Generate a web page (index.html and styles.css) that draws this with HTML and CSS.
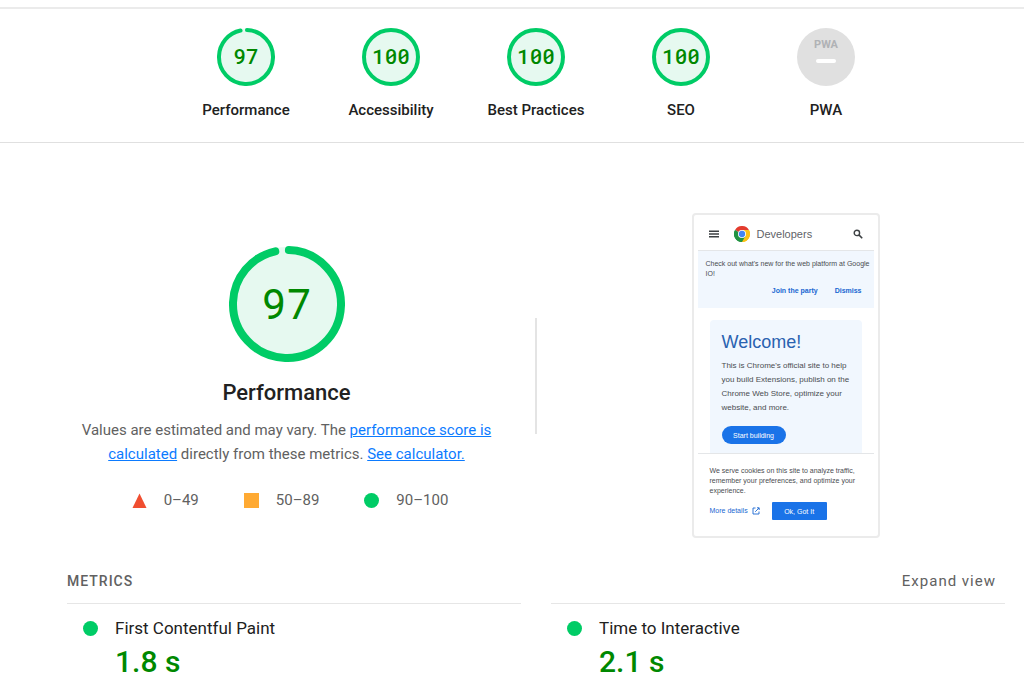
FILE: index.html
```html
<!DOCTYPE html>
<html lang="en">
<head>
    <meta charset="utf-8">
    <meta name="viewport" content="width=device-width, initial-scale=1">
    <link rel="stylesheet" href="styles.css">
    <title>Lighthouse Report</title>
</head>
<body>

    <header class="scores">
        <a href="#performance" class="score">
            <div class="gauge">
                <svg viewBox="0 0 116 116"><circle class="gauge-base" cx="58" cy="58" r="57"/><circle class="gauge-arc gauge-arc-97" cx="58" cy="58" r="54"/></svg>
                <span class="gauge-number">97</span>
            </div>
            <span class="score-label">Performance</span>
        </a>
        <a href="#accessibility" class="score">
            <div class="gauge">
                <svg viewBox="0 0 116 116"><circle class="gauge-base" cx="58" cy="58" r="57"/><circle class="gauge-arc" cx="58" cy="58" r="54"/></svg>
                <span class="gauge-number">100</span>
            </div>
            <span class="score-label">Accessibility</span>
        </a>
        <a href="#best-practices" class="score">
            <div class="gauge">
                <svg viewBox="0 0 116 116"><circle class="gauge-base" cx="58" cy="58" r="57"/><circle class="gauge-arc" cx="58" cy="58" r="54"/></svg>
                <span class="gauge-number">100</span>
            </div>
            <span class="score-label">Best Practices</span>
        </a>
        <a href="#seo" class="score">
            <div class="gauge">
                <svg viewBox="0 0 116 116"><circle class="gauge-base" cx="58" cy="58" r="57"/><circle class="gauge-arc" cx="58" cy="58" r="54"/></svg>
                <span class="gauge-number">100</span>
            </div>
            <span class="score-label">SEO</span>
        </a>
        <a href="#pwa" class="score">
            <div class="gauge gauge-pwa">
                <span class="pwa-text">PWA</span>
                <span class="pwa-dash"></span>
            </div>
            <span class="score-label">PWA</span>
        </a>
    </header>

    <main class="report" id="performance">

        <section class="category">
            <div class="summary">
                <div class="gauge gauge-big">
                    <svg viewBox="0 0 116 116"><circle class="gauge-base" cx="58" cy="58" r="57"/><circle class="gauge-arc gauge-arc-97" cx="58" cy="58" r="54"/></svg>
                    <span class="gauge-number">97</span>
                </div>
                <h1 class="summary-title">Performance</h1>
                <p class="summary-text">Values are estimated and may vary. The <a href="#scoring">performance score is calculated</a> directly from these metrics. <a href="#calculator">See calculator.</a></p>
                <ul class="legend">
                    <li><svg class="mark" viewBox="0 0 15 15"><path d="M7.5 0.5 L14.5 15 H0.5 Z" fill="#f04e30"/></svg>0–49</li>
                    <li><svg class="mark" viewBox="0 0 15 15"><rect width="15" height="15" fill="#ffaa33"/></svg>50–89</li>
                    <li><svg class="mark" viewBox="0 0 15 15"><circle cx="7.5" cy="7.5" r="7.5" fill="#00cc66"/></svg>90–100</li>
                </ul>
            </div>

            <div class="divider"></div>

            <!-- final screenshot of the audited page -->
            <div class="phone">
                <div class="phone-bar">
                    <svg class="menu-icon" viewBox="0 0 10 8"><path d="M0 1.2H10M0 4H10M0 6.8H10" stroke="#3c4043" stroke-width="1.4"/></svg>
                    <svg class="chrome-icon" viewBox="0 0 48 48">
                        <circle cx="24" cy="24" r="24" fill="#fff"/>
                        <path d="M24 24 L3.2 12 A24 24 0 0 1 44.8 12 Z" fill="#e33b2e"/>
                        <path d="M24 24 L44.8 12 A24 24 0 0 1 24 48 Z" fill="#fbc116"/>
                        <path d="M24 24 L24 48 A24 24 0 0 1 3.2 12 Z" fill="#229342"/>
                        <path d="M24 12 H44.8 A24 24 0 0 1 24 48 L34.4 30 Z" fill="#fbc116"/>
                        <path d="M13.6 30 L3.2 12 A24 24 0 0 0 24 48 L34.4 30 Z" fill="#229342"/>
                        <circle cx="24" cy="24" r="12" fill="#fff"/>
                        <circle cx="24" cy="24" r="9.5" fill="#4285f4"/>
                    </svg>
                    <span class="phone-brand">Developers</span>
                    <svg class="search-icon" viewBox="0 0 10 10"><circle cx="3.9" cy="3.9" r="2.7" fill="none" stroke="#3c4043" stroke-width="1.4"/><path d="M5.9 5.9 L9.2 9.2" stroke="#3c4043" stroke-width="1.6"/></svg>
                </div>
                <div class="notice">
                    <p>Check out what's new for the web platform at Google IO!</p>
                    <div class="notice-links"><a href="#party">Join the party</a><a href="#dismiss">Dismiss</a></div>
                </div>
                <div class="welcome">
                    <h2>Welcome!</h2>
                    <p>This is Chrome's official site to help you build Extensions, publish on the Chrome Web Store, optimize your website, and more.</p>
                    <button type="button" class="start">Start building</button>
                </div>
                <div class="cookies">
                    <p>We serve cookies on this site to analyze traffic, remember your preferences, and optimize your experience.</p>
                    <div class="cookies-row">
                        <a href="#details">More details<svg class="open-icon" viewBox="0 0 8 8"><path d="M3.5 1H1V7H7V4.5M5 0.8H7.2V3M7 1L3.2 4.8" fill="none" stroke="#1967d2" stroke-width="0.9"/></svg></a>
                        <button type="button" class="got-it">Ok, Got It</button>
                    </div>
                </div>
            </div>
        </section>

        <section class="metrics">
            <div class="metrics-head">
                <h2>METRICS</h2>
                <button type="button" class="expand">Expand view</button>
            </div>
            <div class="metrics-list">
                <div class="metric">
                    <span class="dot"></span>
                    <div>
                        <h3>First Contentful Paint</h3>
                        <p class="metric-value">1.8 s</p>
                    </div>
                </div>
                <div class="metric">
                    <span class="dot"></span>
                    <div>
                        <h3>Time to Interactive</h3>
                        <p class="metric-value">2.1 s</p>
                    </div>
                </div>
            </div>
        </section>

    </main>

</body>
</html>
```
FILE: styles.css
```css
* {
    box-sizing: border-box;
}

body {
    margin: 0;
    background-color: #fff;
    color: #212121;
    font-family: Roboto, "Liberation Sans", sans-serif;
    font-size: 15px;
}

h1, h2, h3, p, ul {
    margin: 0;
    padding: 0;
    font-weight: 400;
}

button {
    border: none;
    padding: 0;
    background: none;
    font-family: inherit;
    cursor: pointer;
}

/* score row */

.scores {
    display: flex;
    justify-content: center;
    margin-top: 7px;
    padding: 19px 19px 22px 67px;
    border-top: 2px solid #ebebeb;
    border-bottom: 1px solid #e0e0e0;
}

.score {
    display: flex;
    flex-direction: column;
    align-items: center;
    gap: 14px;
    width: 145px;
    color: inherit;
    text-decoration: none;
}

.score-label {
    font-weight: 500;
    line-height: 20px;
}

.gauge {
    display: grid;
    place-items: center;
    width: 58px;
    height: 58px;
    color: #008800;
    font-family: "Roboto Mono", "DejaVu Sans Mono", monospace;
    font-size: 21px;
    font-weight: 500;
}

.gauge svg, .gauge-number {
    grid-area: 1 / 1;
}

.gauge svg {
    width: 100%;
    height: 100%;
}

.gauge-number {
    padding-bottom: 2px;
}

.gauge-base {
    fill: #e6f9f0;
}

.gauge-arc {
    fill: none;
    stroke: #00cc66;
    stroke-width: 8;
    stroke-linecap: round;
}

.gauge-arc-97 {
    stroke-dasharray: 325 340;
    transform: rotate(-88deg);
    transform-origin: center;
}

.gauge-big {
    width: 116px;
    height: 116px;
    font-size: 42px;
    font-weight: 400;
}

.gauge-big .gauge-number {
    padding-bottom: 4px;
}

.gauge-pwa {
    align-content: center;
    gap: 8px;
    padding-bottom: 12px;
    border-radius: 50%;
    background-color: #e0e0e0;
}

.pwa-text {
    color: #b0b2b5;
    font-family: Roboto, sans-serif;
    font-size: 11px;
    font-weight: 700;
    line-height: 12px;
}

.pwa-dash {
    width: 20px;
    height: 4px;
    border-radius: 2px;
    background-color: #fff;
}

/* performance category */

.report {
    padding: 70px 19px 0 67px;
}

.category {
    display: grid;
    grid-template-columns: 1fr 2px 1fr;
    gap: 29px;
    align-items: center;
    justify-items: center;
}

.summary {
    display: flex;
    flex-direction: column;
    align-items: center;
    padding-top: 5px;
}

.summary-title {
    margin-top: 17px;
    font-size: 22px;
    font-weight: 500;
    line-height: 28px;
}

.summary-text {
    max-width: 410px;
    margin-top: 11px;
    color: #616161;
    line-height: 24px;
    text-align: center;
}

.summary-text a {
    color: #0c7bff;
}

.legend {
    display: flex;
    margin-top: 24px;
    color: #616161;
    line-height: 20px;
    list-style: none;
}

.legend li {
    display: flex;
    align-items: center;
    gap: 17px;
    margin: 0 19px 0 26px;
}

.mark {
    width: 15px;
    height: 15px;
}

.divider {
    width: 2px;
    height: 116px;
    background-color: #e4e4e4;
}

/* page screenshot */

.phone {
    width: 188px;
    padding: 4px 4px 16px;
    border: 2px solid #ebebeb;
    border-radius: 4px;
    color: #4a4d51;
    font-family: "Liberation Sans", Arial, sans-serif;
    font-size: 7px;
}

.phone a {
    color: #1967d2;
    text-decoration: none;
}

.phone-bar {
    display: flex;
    align-items: center;
    height: 32px;
    padding: 0 11px 1px;
    border-bottom: 1px solid #e4e6e8;
}

.menu-icon {
    width: 10px;
    height: 8px;
}

.chrome-icon {
    width: 16px;
    height: 16px;
    margin-left: 15px;
}

.phone-brand {
    margin-left: 7px;
    color: #5f6368;
    font-size: 11px;
}

.search-icon {
    width: 10px;
    height: 10px;
    margin-left: auto;
}

.notice {
    padding: 8px 2px 12px 8px;
    background-color: #f1f7fe;
    line-height: 10px;
}

.notice-links {
    display: flex;
    justify-content: flex-end;
    gap: 17px;
    margin-top: 7px;
    padding-right: 10px;
    font-weight: 700;
}

.welcome {
    margin: 12px 12px 0;
    padding: 11px 8px 9px 12px;
    border-radius: 4px 4px 0 0;
    background-color: #f1f7fe;
}

.welcome h2 {
    color: #2a62b0;
    font-size: 18px;
    line-height: 22px;
}

.welcome p {
    margin-top: 6px;
    font-size: 8px;
    line-height: 14px;
}

.start {
    width: 64px;
    height: 18px;
    margin-top: 11px;
    border-radius: 9px;
    background-color: #1a73e8;
    color: #fff;
    font-size: 7px;
}

.cookies {
    padding: 12px 12px 0;
    border-top: 1px solid #e4e6e8;
    line-height: 10px;
}

.cookies-row {
    display: flex;
    align-items: center;
    gap: 12px;
    margin-top: 6px;
}

.cookies-row a {
    display: flex;
    align-items: center;
    gap: 4px;
}

.open-icon {
    width: 8px;
    height: 8px;
}

.got-it {
    width: 55px;
    height: 18px;
    border-radius: 1px;
    background-color: #1a73e8;
    color: #fff;
    font-size: 7px;
}

/* metrics */

.metrics {
    margin-top: 31px;
}

.metrics-head {
    display: flex;
    align-items: center;
    justify-content: space-between;
    padding-right: 9px;
    color: #616161;
    line-height: 24px;
}

.metrics-head h2 {
    font-size: 14px;
    font-weight: 500;
    letter-spacing: 1px;
}

.expand {
    color: #616161;
    font-size: 15px;
    letter-spacing: 1px;
    line-height: 24px;
}

.metrics-list {
    display: grid;
    grid-template-columns: 1fr 1fr;
    gap: 30px;
    margin-top: 10px;
}

.metric {
    display: flex;
    gap: 17px;
    padding: 12px 16px 0;
    border-top: 1px solid #e6e6e6;
}

.metric h3 {
    font-size: 17px;
    line-height: 24px;
}

.metric-value {
    margin-top: 4px;
    color: #008800;
    font-size: 30px;
    font-weight: 500;
    line-height: 36px;
}

.dot {
    width: 15px;
    height: 15px;
    margin-top: 5px;
    border-radius: 50%;
    background-color: #00cc66;
}
```
